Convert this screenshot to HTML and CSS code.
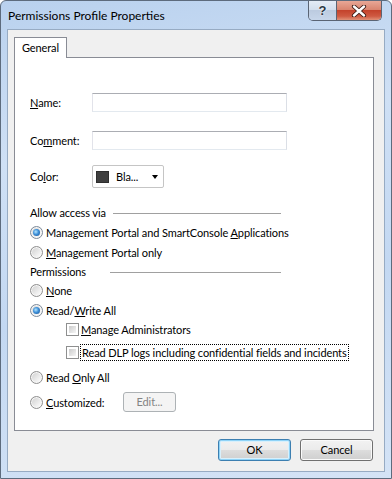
FILE: index.html
```html
<!DOCTYPE html>
<html lang="en">

<head>
    <meta charset="UTF-8">
    <meta name="viewport" content="width=device-width, initial-scale=1.0">
    <title>Permissions Profile Properties</title>
    <link rel="stylesheet" href="styles.css">
</head>

<body>
    <div class="window">
        <div class="titlebar">
            <span class="title">Permissions Profile Properties</span>
            <div class="caption-btns">
                <div class="cb help">?</div>
                <div class="cb close">
                    <svg width="16" height="12" viewBox="0 0 16 12">
                        <path d="M3 1.5 L13 10.5 M13 1.5 L3 10.5" stroke="#3a1a14" stroke-width="4.2" stroke-linecap="round" />
                        <path d="M3 1.5 L13 10.5 M13 1.5 L3 10.5" stroke="#fff" stroke-width="2.4" stroke-linecap="round" />
                    </svg>
                </div>
            </div>
        </div>

        <div class="client">
            <div class="tabs">
                <div class="tab">General</div>
            </div>
            <div class="panel">
                <div class="row row-name">
                    <span class="lbl"><u>N</u>ame:</span>
                    <div class="text"></div>
                </div>
                <div class="row row-comment">
                    <span class="lbl">Co<u>m</u>ment:</span>
                    <div class="text"></div>
                </div>
                <div class="row row-color">
                    <span class="lbl">Co<u>l</u>or:</span>
                    <div class="combo">
                        <span class="swatch"></span>
                        <span class="combo-text">Bla...</span>
                        <span class="arrow"></span>
                    </div>
                </div>

                <div class="hdr hdr-access">
                    <span class="hdr-text">Allow access via</span>
                    <span class="hdr-line"></span>
                </div>
                <div class="opt">
                    <span class="radio on"></span>
                    <span>Management Portal and SmartConsole <u>A</u>pplications</span>
                </div>
                <div class="opt">
                    <span class="radio"></span>
                    <span><u>M</u>anagement Portal only</span>
                </div>

                <div class="hdr hdr-perm">
                    <span class="hdr-text">Permissions</span>
                    <span class="hdr-line"></span>
                </div>
                <div class="opt">
                    <span class="radio"></span>
                    <span><u>N</u>one</span>
                </div>
                <div class="opt">
                    <span class="radio on"></span>
                    <span>Read/<u>W</u>rite All</span>
                </div>
                <div class="opt sub sub-first">
                    <span class="check"></span>
                    <span><u>M</u>anage Administrators</span>
                </div>
                <div class="opt sub sub-second">
                    <span class="check"></span>
                    <span class="focus">Read DLP logs including confidential fields and incidents</span>
                </div>
                <div class="opt opt-readonly">
                    <span class="radio"></span>
                    <span>Read <u>O</u>nly All</span>
                </div>
                <div class="opt opt-custom">
                    <span class="radio"></span>
                    <span class="cust-label"><u>C</u>ustomized:</span>
                    <div class="edit-btn">Edit...</div>
                </div>
            </div>

            <div class="buttons">
                <div class="btn default">OK</div>
                <div class="btn">Cancel</div>
            </div>
        </div>
    </div>
</body>

</html>
```

FILE: styles.css
```css
body {
    margin: 0;
    font-family: Lato, "Liberation Sans", sans-serif;
    font-size: 11px;
    letter-spacing: -0.1px;
    color: #000;
    white-space: nowrap;
}

.window {
    box-sizing: border-box;
    width: 392px;
    height: 479px;
    border: 1px solid #5d6b7d;
    border-radius: 6px 6px 0 0;
    background: linear-gradient(170deg, #b9d1ee 0%, #cfe0f5 30%, #c3d8f2 60%, #d4e3f6 100%);
    display: flex;
    flex-direction: column;
}

.titlebar {
    height: 28px;
    display: flex;
    align-items: flex-start;
}

.title {
    margin: 7px 0 0 7px;
    line-height: 16px;
    font-size: 12px;
    letter-spacing: 0;
}

.caption-btns {
    display: flex;
    margin-left: auto;
    margin-right: 9px;
    border: 1px solid #5a6474;
    border-top: none;
    border-radius: 0 0 5px 5px;
    overflow: hidden;
    height: 19px;
}

.cb {
    display: flex;
    align-items: center;
    justify-content: center;
}

.help {
    width: 27px;
    border-right: 1px solid #5a6474;
    background: linear-gradient(#e4ecf6 0%, #d3dfee 45%, #bccbe0 50%, #c7d6ea 100%);
    font-family: "Liberation Sans", sans-serif;
    font-weight: bold;
    font-size: 13px;
    color: #2b3645;
    text-shadow: 0 0 2px #fff, 0 0 1px #fff;
}

.close {
    width: 44px;
    background: linear-gradient(#e8a796 0%, #d98570 45%, #c4432c 50%, #cf5a42 80%, #e09178 100%);
}

.client {
    box-sizing: border-box;
    height: 443px;
    margin: 0 6px;
    border: 1px solid #97abc3;
    background: #f0f0f0;
    padding: 7px 10px 0 6px;
}

.tabs {
    display: flex;
}

.tab {
    position: relative;
    z-index: 1;
    box-sizing: border-box;
    width: 53px;
    height: 21px;
    margin-bottom: -1px;
    border: 1px solid #898c95;
    border-bottom: none;
    background: #fff;
    text-align: center;
    line-height: 19px;
}

.panel {
    box-sizing: border-box;
    height: 374px;
    border: 1px solid #898c95;
    background: #fff;
    padding: 0 0 0 15px;
}

.row {
    display: flex;
    align-items: center;
}

.row-name { margin-top: 35px; }
.row-comment { margin-top: 19px; }
.row-color { margin-top: 15px; }

.lbl {
    width: 62px;
}

.text {
    box-sizing: border-box;
    width: 195px;
    height: 19px;
    border: 1px solid;
    border-color: #abadb3 #dbdfe6 #e3e9ef #e2e3ea;
    background: #fff;
}

.combo {
    box-sizing: border-box;
    width: 72px;
    height: 23px;
    border: 1px solid #c5c5c5;
    border-radius: 2px;
    display: flex;
    align-items: center;
    padding: 0 5px 0 3px;
}

.swatch {
    box-sizing: border-box;
    width: 13px;
    height: 12px;
    background: #3f3f3f;
    border: 1px solid #2e2e2e;
}

.combo-text {
    margin-left: 7px;
}

.arrow {
    margin-left: auto;
    width: 0;
    height: 0;
    border-top: 4px solid #000;
    border-left: 3.5px solid transparent;
    border-right: 3.5px solid transparent;
}

.hdr {
    display: flex;
    align-items: center;
    height: 20px;
}

.hdr-access { margin-top: 14px; }
.hdr-access .hdr-text { width: 83px; }
.hdr-access .hdr-line { width: 168px; }

.hdr-perm { height: 18px; }
.hdr-perm .hdr-text { width: 80px; }
.hdr-perm .hdr-line { width: 171px; }

.hdr-line {
    height: 1px;
    background: #a0a0a0;
    margin-top: 2px;
}

.opt {
    display: flex;
    align-items: center;
    height: 20px;
    gap: 3px;
}

.sub {
    padding-left: 36px;
    gap: 2px;
}

.sub-first { height: 18px; }
.sub-second { margin-top: 4px; }
.opt-readonly { margin-top: 5px; }
.opt-custom { margin-top: 5px; }

.radio {
    position: relative;
    box-sizing: border-box;
    width: 13px;
    height: 13px;
    border-radius: 50%;
    border: 1px solid #8f8f8f;
    background: linear-gradient(135deg, #cdcdcd, #f2f2f2 70%, #ffffff);
    box-shadow: inset 0 0 0 1px #f7f7f7;
    flex-shrink: 0;
}

.radio.on {
    border-color: #7d8a99;
}

.radio.on::after {
    content: "";
    position: absolute;
    left: 2px;
    top: 2px;
    width: 7px;
    height: 7px;
    border-radius: 50%;
    background: radial-gradient(circle at 40% 40%, #b5e6ff 0%, #3d8fd8 45%, #174f8f 100%);
}

.check {
    box-sizing: border-box;
    width: 13px;
    height: 13px;
    border: 1px solid #8e8f8f;
    padding: 2px;
    background: linear-gradient(135deg, #cbcbcb, #f6f6f6) content-box, #fff;
    flex-shrink: 0;
}

.focus {
    outline: 1px dotted #000;
    outline-offset: 0;
    padding: 0 1px;
    line-height: 15px;
}

.cust-label {
    width: 74px;
}

.edit-btn {
    box-sizing: border-box;
    width: 53px;
    height: 20px;
    border: 1px solid #adb2b5;
    border-radius: 3px;
    background: #f4f4f4;
    color: #838383;
    text-align: center;
    line-height: 18px;
}

.buttons {
    display: flex;
    justify-content: flex-end;
    gap: 9px;
    margin-top: 8px;
    padding-right: 1px;
}

.btn {
    box-sizing: border-box;
    width: 73px;
    height: 22px;
    border: 1px solid #707070;
    border-radius: 3px;
    background: linear-gradient(#f2f2f2 0%, #ebebeb 50%, #dddddd 50%, #cfcfcf 100%);
    box-shadow: inset 0 0 0 1px #fafafa;
    text-align: center;
    line-height: 20px;
}

.btn.default {
    border-color: #3c7fb1;
    box-shadow: inset 0 0 0 1px #8fd3f7, inset 0 0 0 2px #d8f0fc;
}
```
